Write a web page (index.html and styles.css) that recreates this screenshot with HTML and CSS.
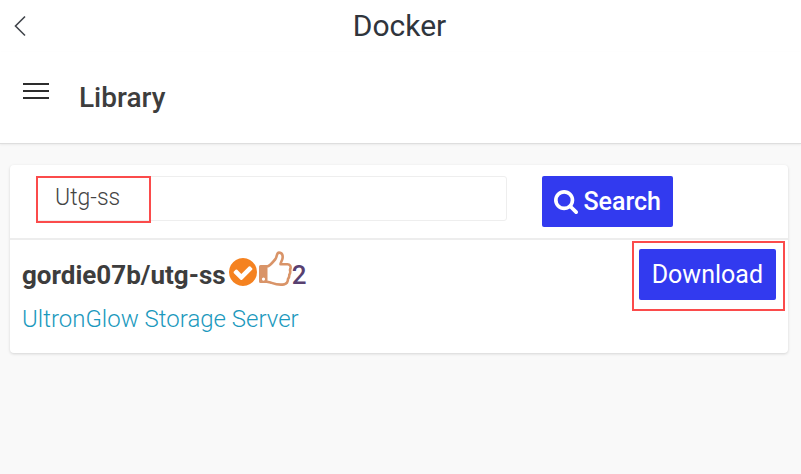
FILE: index.html
```html
<!DOCTYPE html>
<html lang="en">
<head>
<meta charset="utf-8">
<meta name="viewport" content="width=device-width, initial-scale=1">
<title>Docker</title>
<link rel="stylesheet" href="styles.css">
</head>
<body>
<header class="topbar">
  <button class="icon-button" type="button" aria-label="Back">
    <svg width="12" height="22" viewBox="0 0 12 22"><path d="M11 1.5 1.5 11 11 20.5" fill="none" stroke="#41454b" stroke-width="1.6"/></svg>
  </button>
  <h1 class="title">Docker</h1>
</header>
<nav class="subbar">
  <button class="icon-button" type="button" aria-label="Menu">
    <svg width="26" height="18" viewBox="0 0 26 18"><path d="M0 2h26M0 9h26M0 16h26" fill="none" stroke="#2d2d2d" stroke-width="2"/></svg>
  </button>
  <h2 class="heading">Library</h2>
</nav>
<main class="content">
  <section class="card">
    <form class="search">
      <div class="field">
        <input class="field-input" type="text" aria-label="Search images" value="Utg-ss">
        <span class="field-mark"></span>
      </div>
      <button class="button button-search" type="button">
        <svg width="24" height="24" viewBox="64 128 1664 1664" fill="#fff" aria-hidden="true"><path d="M1216 832q0-185-131.500-316.500t-316.500-131.500-316.500 131.500-131.500 316.500 131.500 316.500 316.500 131.500 316.500-131.500 131.500-316.500zm512 832q0 52-38 90t-90 38q-54 0-90-38l-343-342q-179 124-399 124-143 0-273.500-55.500t-225-150-150-225-55.500-273.500 55.500-273.500 150-225 225-150 273.500-55.500 273.500 55.500 225 150 150 225 55.500 273.500q0 220-124 399l343 343q37 37 37 90z"/></svg>
        Search
      </button>
    </form>
    <article class="result">
      <div class="result-info">
        <h3 class="result-name">
          <span>gordie07b/utg-ss</span>
          <svg class="verified" width="28" height="28" viewBox="128 128 1536 1536" aria-hidden="true"><path fill="#f58220" d="M1412 734q0-28-18-46l-91-90q-19-19-45-19t-45 19l-408 407-226-226q-19-19-45-19t-45 19l-91 90q-18 18-18 46 0 27 18 45l362 362q19 19 45 19 27 0 46-19l543-543q18-18 18-45zm252 162q0 209-103 385.500t-279.500 279.500-385.500 103-385.500-103-279.500-279.500-103-385.500 103-385.500 279.500-279.500 385.500-103 385.500 103 279.500 279.500 103 385.500z"/></svg>
          <svg class="thumb" width="33" height="36" viewBox="0 0 33 36" aria-hidden="true">
            <path fill="#d99468" fill-rule="evenodd" d="M1.500 14h7v18h-7Q0 32 0 30.500v-15Q0 14 1.500 14zM4.500 26.500a1.600 1.600 0 1 0 0 3.200a1.600 1.600 0 0 0 0-3.200z"/>
            <path fill="none" stroke="#d99468" stroke-width="2.600" stroke-linejoin="round" d="M8 15.500C12 14.500 14 10.500 16.500 8C18 6.200 17.500 1.600 20 1.600C23.500 1.600 24 5 23.500 7.500C23 10 21.500 11.500 21.500 13.300H28.500C31 13.300 32 15.500 31.500 17.500L31 19Q31.800 21.500 30.300 23.700Q30.500 26 29 28Q29 32.500 25 33.400C19 34.500 14.500 32.500 11.500 31.500L8 30.700"/>
          </svg>
          <span class="count">2</span>
        </h3>
        <a class="result-link" href="#">UltronGlow Storage Server</a>
      </div>
      <div class="action-mark">
        <button class="button button-download" type="button">Download</button>
      </div>
    </article>
  </section>
</main>
</body>
</html>
```
FILE: styles.css
```css
* {
  box-sizing: border-box;
}

body {
  margin: 0;
  min-height: 100vh;
  background: #f9f9f9;
  font-family: Roboto, sans-serif;
  color: #3d3d3d;
}

h1, h2, h3 {
  margin: 0;
}

.icon-button {
  display: flex;
  padding: 0;
  border: 0;
  background: none;
}

.topbar {
  display: grid;
  grid-template-columns: 1fr auto 1fr;
  align-items: center;
  height: 52px;
  padding: 0 16px 0 14px;
  background: #fff;
}

.title {
  font-size: 30px;
  line-height: 36px;
  font-weight: 400;
  color: #30353c;
}

.subbar {
  display: flex;
  gap: 30px;
  height: 92px;
  padding: 30px 23px;
  background: #fff;
  border-bottom: 1px solid #dedede;
  box-shadow: 0 1px 2px #0000000f;
}

.heading {
  font-size: 28px;
  line-height: 32px;
  font-weight: 500;
}

.content {
  padding: 21px 13px 21px 10px;
}

.card {
  background: #fff;
  border-radius: 4px;
  box-shadow: 0 1px 3px #00000026;
}

.search {
  display: flex;
  align-items: flex-start;
  gap: 35px;
  padding: 11px 115px 11px 26px;
  border-bottom: 2px solid #ededed;
}

.field {
  position: relative;
  flex: 1;
}

.field-input {
  display: block;
  width: 100%;
  height: 45px;
  padding: 0 18px 2px;
  border: 1px solid #eee;
  border-radius: 3px;
  background: #fff;
  color: #444;
  font: 300 23px Roboto, sans-serif;
}

.field-mark {
  position: absolute;
  top: 0;
  left: 0;
  width: 115px;
  height: 47px;
  border: 2px solid #fb4b4b;
  pointer-events: none;
}

.button {
  display: flex;
  align-items: center;
  justify-content: center;
  gap: 5px;
  height: 51px;
  padding: 0 13px;
  border: 0;
  border-radius: 2px;
  background: #323aef;
  color: #fff;
  font: 400 25px Roboto, sans-serif;
}

.button-search {
  padding: 0 12px;
  font-weight: 500;
}

.result {
  display: flex;
  align-items: flex-start;
  justify-content: space-between;
  padding: 1px 3px 16px 12px;
}

.result-info {
  padding-top: 10px;
}

.result-name {
  display: flex;
  align-items: center;
  font-size: 26px;
  line-height: 48px;
  font-weight: 700;
}

.verified {
  margin: 0 2px 6px 3px;
}

.thumb {
  margin-bottom: 12px;
}

.count {
  font-weight: 500;
  color: #584070;
}

.result-link {
  display: block;
  padding-top: 2px;
  font-size: 24px;
  line-height: 36px;
  font-weight: 300;
  color: #1b99bd;
  text-decoration: none;
}

.action-mark {
  padding: 6px 7px 9px 5px;
  border: 2px solid #fb4b4b;
}
```
